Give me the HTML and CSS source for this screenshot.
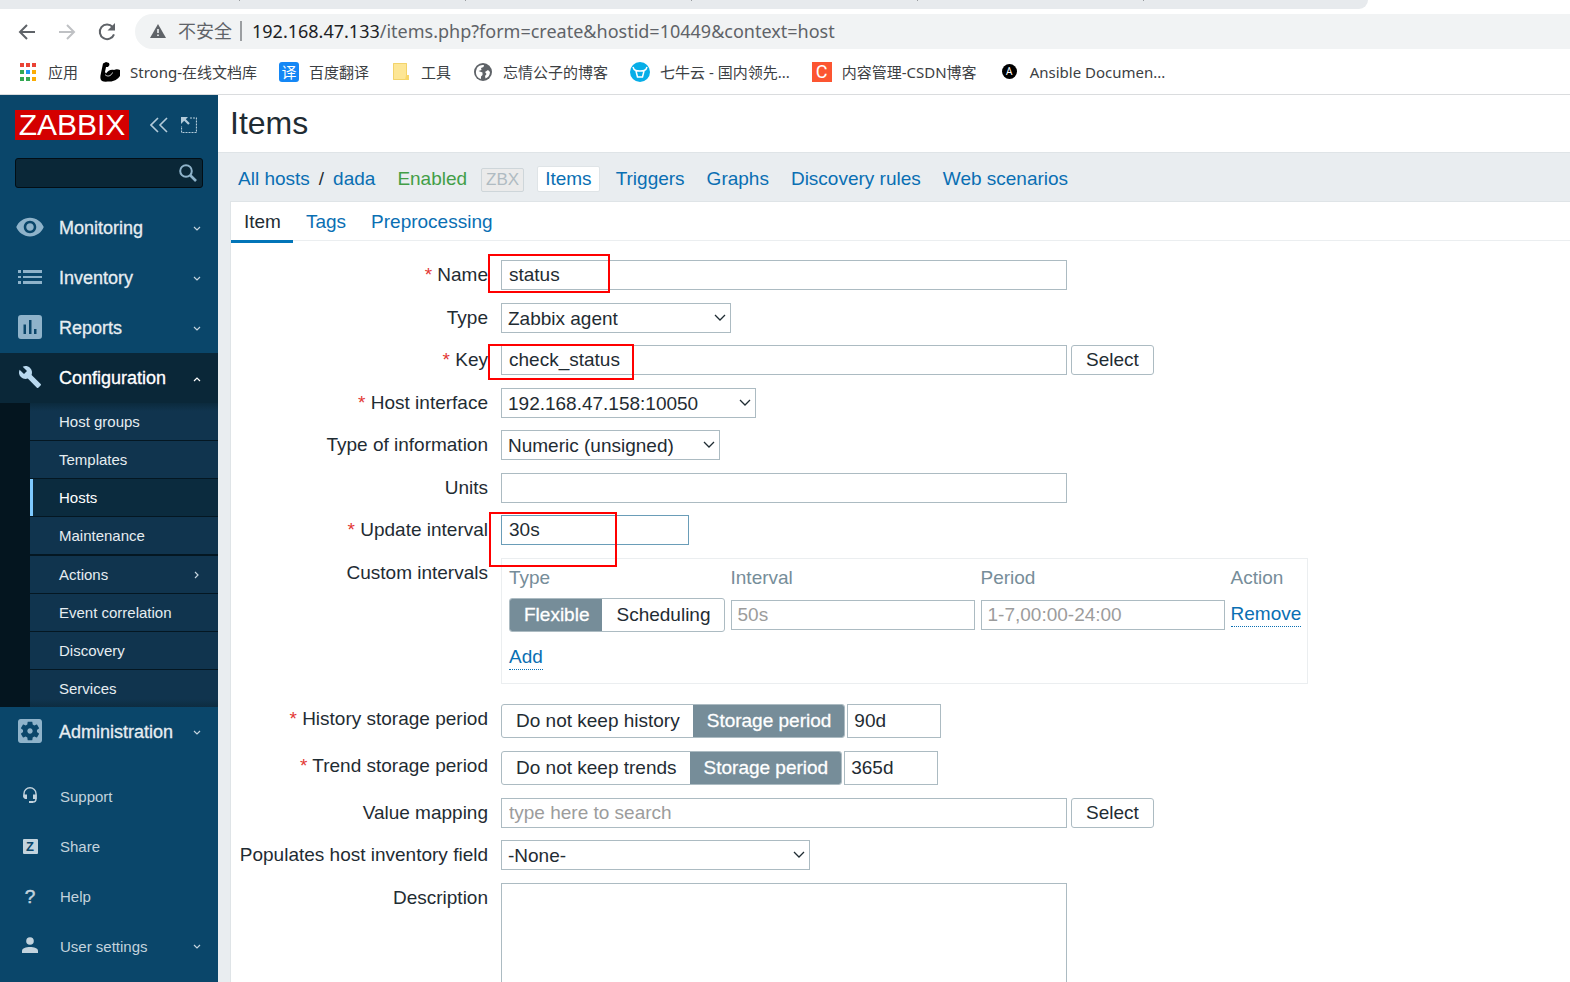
FILE: index.html
```html
<!DOCTYPE html>
<html lang="en">
<head>
<meta charset="utf-8">
<title>Items</title>
<link rel="stylesheet" href="styles.css">
</head>
<body>
<svg class="defs" aria-hidden="true">
  <symbol id="chev-down" viewBox="0 0 8 6"><path d="M1 1l3 3 3-3" fill="none" stroke="currentColor" stroke-width="1.2"/></symbol>
  <symbol id="select-arrow" viewBox="0 0 12 8"><path d="M1 1l5 5 5-5" fill="none" stroke="currentColor" stroke-width="1.3"/></symbol>
</svg>
<div class="window">
  <header class="browser">
    <div class="tabstrip"><i></i><i></i><i></i><i></i><i></i></div>
    <div class="toolbar">
      <button class="tool" aria-label="Back"><svg width="18" height="16" viewBox="0 0 18 16"><path d="M17 8H2M9 1L2 8l7 7" fill="none" stroke="#5f6368" stroke-width="2"/></svg></button>
      <button class="tool" aria-label="Forward"><svg width="18" height="16" viewBox="0 0 18 16"><path d="M1 8h15M9 1l7 7-7 7" fill="none" stroke="#bfc1c4" stroke-width="2"/></svg></button>
      <button class="tool" aria-label="Reload"><svg width="18" height="18" viewBox="0 0 18 18"><path d="M14.600 4A7.300 7.300 0 1 0 16 11.300" fill="none" stroke="#5f6368" stroke-width="2"/><path d="M17 0v7.500H9.500z" fill="#5f6368"/></svg></button>
      <div class="address">
        <svg width="16" height="14" viewBox="0 0 16 14"><path d="M8 0l8 14H0z" fill="#5f6368"/><path d="M7.200 5h1.600v4H7.200zM7.200 10.400h1.600V12H7.200z" fill="#f1f3f4"/></svg>
        <span class="insecure">不安全</span>
        <span class="url"><b>192.168.47.133</b>/items.php?form=create&amp;hostid=10449&amp;context=host</span>
      </div>
    </div>
    <nav class="bookmarks">
      <a href="#"><svg width="20" height="18" viewBox="0 0 20 18"><g fill="#ea4335"><path d="M2 0h4v4H2zM8 0h4v4H8zM14 0h4v4h-4z"/></g><path d="M2 7h4v4H2zM2 14h4v4H2zM8 14h4v4H8z" fill="#34a853"/><path d="M8 7h4v4H8z" fill="#2196f3"/><path d="M14 7h4v4h-4zM14 14h4v4h-4z" fill="#fbac04"/></svg>应用</a>
      <a href="#"><svg width="20" height="20" viewBox="0 0 20 20"><path d="M3 1.500L6 0l3 1 .5 2L8 5H6l-1 5 1 1.500C8 8.500 11 7 14 8c2-1.200 4-1 6 0v6c-2 3-6 5.500-10 5.500-3 0-6 .5-8-.5-2-1.500-2-4-1-8z" fill="#000"/><path d="M5 12.500c2 2.500 6 2 7.500-2" fill="none" stroke="#fff" stroke-width=".8"/></svg>Strong-在线文档库</a>
      <a href="#"><span class="fav fav-yi">译</span>百度翻译</a>
      <a href="#"><svg width="20" height="20" viewBox="0 0 20 20"><path d="M2 1h14v12l2 1v4H2z" fill="#fde48d"/><path d="M2.500 1.500h13v16h-13z" fill="#fde695" stroke="#f2d36b"/><path d="M15 13h3v5h-4z" fill="#f8d76a"/></svg>工具</a>
      <a href="#"><svg width="20" height="20" viewBox="0 0 20 20"><circle cx="10" cy="10" r="9" fill="#5f6368"/><path d="M4 6c1.500-2.500 4.500-3.500 7-3l-.5 2-2.500 1 .5 2-3 1 4 1.500v2.500L8 14.500V17C4.500 16 2.500 13 3 9zM12 10l3-2 2 2c0 3.500-2 5.500-4.500 6.500L12 14l1.500-2z" fill="#fff"/></svg>忘情公子的博客</a>
      <a href="#"><svg width="20" height="20" viewBox="0 0 20 20"><circle cx="10" cy="10" r="10" fill="#07aee8"/><path d="M3 5c1 4 4 4 7 4s6 0 7-4M6 9l1.500 6h5L14 9" fill="none" stroke="#fff" stroke-width="1.500"/></svg>七牛云 - 国内领先...</a>
      <a href="#"><span class="fav fav-c">C</span>内容管理-CSDN博客</a>
      <a href="#"><span class="fav fav-a">A</span>Ansible Documen...</a>
    </nav>
  </header>

  <div class="app">
    <aside class="sidebar">
      <div class="brand">
        <a class="logo" href="#">ZABBIX</a>
        <button class="side-btn" aria-label="Collapse sidebar"><svg width="18" height="16" viewBox="0 0 18 16"><path d="M8 1L1 8l7 7M17 1l-7 7 7 7" fill="none" stroke="currentColor" stroke-width="1.600"/></svg></button>
        <button class="side-btn" aria-label="Hide sidebar"><svg width="16" height="16" viewBox="0 0 16 16"><path d="M0 0h7L4.800 2.200l4 4-1.600 1.600-4-4L0 7z" fill="currentColor"/><path d="M9 1h6.500v14.500H.5V9" fill="none" stroke="currentColor" stroke-width="1.200" stroke-dasharray="2 1"/></svg></button>
      </div>
      <div class="search">
        <input type="search" aria-label="Search">
        <svg width="18" height="18" viewBox="0 0 18 18"><circle cx="7" cy="7" r="5.800" fill="none" stroke="currentColor" stroke-width="2"/><path d="M11 11l6 6" stroke="currentColor" stroke-width="2.600"/></svg>
      </div>
      <nav>
        <a class="menu" href="#"><svg class="ico" width="30" height="30" viewBox="0 0 24 24"><path fill="currentColor" d="M12 4.500C7 4.500 2.730 7.610 1 12c1.730 4.390 6 7.500 11 7.500s9.270-3.110 11-7.500c-1.730-4.390-6-7.500-11-7.500zM12 17c-2.760 0-5-2.240-5-5s2.240-5 5-5 5 2.240 5 5-2.240 5-5 5zm0-8c-1.660 0-3 1.340-3 3s1.340 3 3 3 3-1.340 3-3-1.340-3-3-3z"/></svg><span>Monitoring</span><svg class="chev"><use href="#chev-down"/></svg></a>
        <a class="menu" href="#"><svg class="ico" width="24" height="14" viewBox="0 0 24 14"><path fill="currentColor" d="M0 0h3v3H0zM5 0h19v3H5zM0 6h3v2H0zM5 6h19v2H5zM0 11h3v3H0zM5 11h19v3H5z"/></svg><span>Inventory</span><svg class="chev"><use href="#chev-down"/></svg></a>
        <a class="menu" href="#"><svg class="ico" width="24" height="24" viewBox="0 0 24 24"><path fill="currentColor" fill-rule="evenodd" d="M3 0h18a3 3 0 0 1 3 3v18a3 3 0 0 1-3 3H3a3 3 0 0 1-3-3V3a3 3 0 0 1 3-3zM5.500 9.500V19H8V9.500zM11 5v14h2.500V5zM16 14v5h2.500v-5z"/></svg><span>Reports</span><svg class="chev"><use href="#chev-down"/></svg></a>
        <a class="menu open" href="#"><svg class="ico" width="24" height="24" viewBox="0 0 24 24"><path fill="currentColor" d="M22.700 19l-9.100-9.100c.9-2.300.4-5-1.500-6.900-2-2-5-2.400-7.400-1.300L9 6 6 9 1.600 4.700C.4 7.100.9 10.100 2.900 12.100c1.900 1.900 4.600 2.400 6.900 1.500l9.100 9.100c.4.400 1 .4 1.400 0l2.300-2.300c.5-.4.5-1.100.1-1.400z"/></svg><span>Configuration</span><svg class="chev up"><use href="#chev-down"/></svg></a>
        <div class="submenu">
          <a href="#">Host groups</a>
          <a href="#">Templates</a>
          <a href="#" class="current">Hosts</a>
          <a href="#" class="group-end">Maintenance</a>
          <a href="#">Actions<svg class="chev right"><use href="#chev-down"/></svg></a>
          <a href="#">Event correlation</a>
          <a href="#">Discovery</a>
          <a href="#">Services</a>
        </div>
        <a class="menu" href="#"><svg class="ico" width="24" height="24" viewBox="3 3 18 18"><path fill="currentColor" d="M12 10c-1.100 0-2 .9-2 2s.9 2 2 2 2-.9 2-2-.9-2-2-2zm7-7H5c-1.110 0-2 .9-2 2v14c0 1.100.89 2 2 2h14c1.110 0 2-.9 2-2V5c0-1.100-.89-2-2-2zm-1.750 9c0 .23-.02.46-.05.68l1.480 1.160c.13.11.17.3.08.45l-1.400 2.420c-.09.15-.27.21-.43.15l-1.740-.7c-.36.28-.76.51-1.180.69l-.26 1.850c-.03.17-.18.3-.35.3h-2.800c-.17 0-.32-.13-.35-.29l-.26-1.850c-.43-.18-.82-.41-1.180-.69l-1.740.7c-.16.06-.34 0-.43-.15l-1.400-2.420c-.09-.15-.05-.34.08-.45l1.480-1.160c-.03-.23-.05-.46-.05-.69 0-.23.02-.46.05-.68l-1.480-1.160c-.13-.11-.17-.3-.08-.45l1.400-2.420c.09-.15.27-.21.43-.15l1.740.7c.36-.28.76-.51 1.180-.69l.26-1.850c.03-.17.18-.3.35-.3h2.800c.17 0 .32.13.35.29l.26 1.850c.43.18.82.41 1.180.69l1.740-.7c.16-.06.34 0 .43.15l1.400 2.420c.09.15.05.34-.08.45l-1.480 1.160c.03.23.05.46.05.69z"/></svg><span>Administration</span><svg class="chev"><use href="#chev-down"/></svg></a>
      </nav>
      <nav class="user-nav">
        <a href="#"><svg class="ico" width="16" height="16" viewBox="0 0 16 16"><path d="M2 10V6.500a6 5.700 0 0 1 12 0V12c0 2-1 3-3 3H8" fill="none" stroke="currentColor" stroke-width="1.400"/><path d="M1.300 7.500H5V12H3L1.300 10.500zM14.700 7.500H11V12h3.700zM7 14h4v2H7z" fill="currentColor"/></svg><span>Support</span></a>
        <a href="#"><i class="ico zed">Z</i><span>Share</span></a>
        <a href="#"><i class="ico qm">?</i><span>Help</span></a>
        <a href="#"><svg class="ico" width="16" height="16" viewBox="0 0 16 16"><circle cx="8" cy="4" r="3.800" fill="currentColor"/><path d="M0 16v-2c0-3 4-4 8-4s8 1 8 4v2z" fill="currentColor"/></svg><span>User settings</span><svg class="chev"><use href="#chev-down"/></svg></a>
      </nav>
    </aside>

    <main class="main">
      <header class="page-head"><h1>Items</h1></header>
      <nav class="crumbs">
        <div class="path"><a href="#">All hosts</a><span>/</span><a href="#">dada</a></div>
        <span class="ok">Enabled</span>
        <span class="zbx">ZBX</span>
        <a href="#" class="selected">Items</a>
        <div class="links">
          <a href="#">Triggers</a>
          <a href="#">Graphs</a>
          <a href="#">Discovery rules</a>
          <a href="#">Web scenarios</a>
        </div>
      </nav>
      <section class="panel">
        <nav class="tabs"><a href="#" class="active">Item</a><a href="#">Tags</a><a href="#">Preprocessing</a></nav>
        <form class="form">
          <div class="row tall"><label class="req" for="name">Name</label><div class="field"><input class="wide" id="name" value="status"><span class="mark mark-name"></span></div></div>
          <div class="row"><label for="type">Type</label><div class="field"><span class="select w-type"><select id="type"><option>Zabbix agent</option></select><svg><use href="#select-arrow"/></svg></span></div></div>
          <div class="row tall"><label class="req" for="key">Key</label><div class="field"><input class="wide" id="key" value="check_status"><button type="button" class="btn">Select</button><span class="mark mark-key"></span></div></div>
          <div class="row"><label class="req" for="iface">Host interface</label><div class="field"><span class="select w-iface"><select id="iface"><option>192.168.47.158:10050</option></select><svg><use href="#select-arrow"/></svg></span></div></div>
          <div class="row tall"><label for="info">Type of information</label><div class="field"><span class="select w-info"><select id="info"><option>Numeric (unsigned)</option></select><svg><use href="#select-arrow"/></svg></span></div></div>
          <div class="row"><label for="units">Units</label><div class="field"><input class="wide" id="units"></div></div>
          <div class="row tall"><label class="req" for="delay">Update interval</label><div class="field"><input class="short focus" id="delay" value="30s"><span class="mark mark-delay"></span></div></div>
          <div class="row intervals-row"><span class="label">Custom intervals</span>
            <div class="field">
              <div class="intervals">
                <table>
                  <thead><tr><th>Type</th><th>Interval</th><th>Period</th><th>Action</th></tr></thead>
                  <tbody>
                    <tr>
                      <td><div class="seg"><label><input type="radio" name="itype" checked><span>Flexible</span></label><label><input type="radio" name="itype"><span>Scheduling</span></label></div></td>
                      <td><input class="cell" aria-label="Interval" placeholder="50s"></td>
                      <td><input class="cell" aria-label="Period" placeholder="1-7,00:00-24:00"></td>
                      <td><button type="button" class="link">Remove</button></td>
                    </tr>
                  </tbody>
                </table>
                <button type="button" class="link">Add</button>
              </div>
            </div>
          </div>
          <div class="row storage"><label class="req" for="history">History storage period</label><div class="field tight"><div class="seg"><label><input type="radio" name="hist"><span>Do not keep history</span></label><label><input type="radio" name="hist" checked><span>Storage period</span></label></div><input class="mini" id="history" value="90d"></div></div>
          <div class="row storage"><label class="req" for="trends">Trend storage period</label><div class="field tight"><div class="seg"><label><input type="radio" name="trend"><span>Do not keep trends</span></label><label><input type="radio" name="trend" checked><span>Storage period</span></label></div><input class="mini" id="trends" value="365d"></div></div>
          <div class="row"><label for="vm">Value mapping</label><div class="field"><input class="wide" id="vm" placeholder="type here to search"><button type="button" class="btn">Select</button></div></div>
          <div class="row tall"><label for="inv">Populates host inventory field</label><div class="field"><span class="select w-inv"><select id="inv"><option>-None-</option></select><svg><use href="#select-arrow"/></svg></span></div></div>
          <div class="row"><label for="desc">Description</label><div class="field"><textarea class="wide" id="desc" rows="7"></textarea></div></div>
        </form>
      </section>
    </main>
  </div>
</div>
</body>
</html>
```

FILE: styles.css
```css
* { box-sizing: border-box; }
body { margin: 0; font-family: "Liberation Sans", "Noto Sans CJK SC", Arial, sans-serif; font-size: 19px; color: #1f2c33; background: #fff; }
a { color: #0a6fb3; text-decoration: none; }
button, input, select, textarea { font: inherit; color: inherit; margin: 0; }
button { background: none; border: 0; padding: 0; cursor: pointer; }
svg { display: block; flex: none; }
.defs { display: none; }
.window { display: flex; flex-direction: column; height: 100vh; overflow: hidden; }

/* Browser chrome */
.browser { flex: none; background: #fff; border-bottom: 1px solid #dadcde; font-family: "Noto Sans", "Noto Sans CJK SC", sans-serif; }
.tabstrip { display: flex; gap: 225px; margin-right: 202px; height: 9px; padding-left: 239px; background: #e7eaed; border-bottom-right-radius: 9px; overflow: hidden; }
.tabstrip i { flex: none; width: 1px; height: 1px; background: #9a9da0; }
.toolbar { display: flex; align-items: center; padding: 5px 0 0 7px; }
.tool { display: grid; place-items: center; width: 40px; height: 35px; }
.address { flex: 1; display: flex; align-items: center; height: 35px; margin-left: 8px; padding: 0 0 2px 15px; background: #f1f3f4; border-radius: 18px 0 0 18px; font-size: 18px; line-height: 20px; color: #5f6368; }
.insecure { margin-left: 12px; padding-right: 8px; border-right: 2px solid #9b9ea1; }
.url { margin-left: 10px; white-space: nowrap; }
.url b { font-weight: 400; color: #202124; }
.bookmarks { display: flex; align-items: center; gap: 22px; height: 45px; padding: 0 18px; font-size: 15px; }
.bookmarks a { display: flex; align-items: center; gap: 10px; color: #3c4043; white-space: nowrap; }
.fav { display: grid; place-items: center; width: 20px; height: 20px; color: #fff; line-height: 20px; }
.fav-yi { background: #1487f5; border-radius: 3px; font-size: 15px; }
.fav-c { background: #fc5531; font-family: Roboto, sans-serif; font-size: 18px; }
.fav-a { width: 15px; height: 15px; margin: 0 3px; background: #000; border-radius: 50%; font-size: 10px; line-height: 15px; }

/* Sidebar */
.app { flex: 1; display: flex; min-height: 0; }
.sidebar { flex: none; width: 218px; background: #0a466a; color: #8fb3ca; }
.brand { display: flex; align-items: center; padding: 15px 15px 0; }
.logo { width: 114px; height: 30px; margin-right: 21px; background: #d40000; color: #fff; font-size: 30px; line-height: 30px; text-align: center; }
.side-btn { color: #b3cbda; margin-right: 13px; }
.side-btn:last-child { margin-right: 0; }
.search { display: grid; align-items: center; margin: 18px 15px 15px; color: #8fb3ca; }
.search input, .search svg { grid-area: 1 / 1; }
.search input { width: 100%; height: 30px; padding: 0 30px 0 8px; background: #0a2737; border: 1px solid #020e15; border-radius: 3px; outline: 0; appearance: none; }
.search svg { justify-self: end; margin-right: 6px; }
.menu, .user-nav a { display: grid; grid-template-columns: 59px 1fr 8px; align-items: center; height: 50px; padding-right: 17px; color: #8fb3ca; }
.menu span { color: #e6edf1; font-size: 18px; -webkit-text-stroke: 0.3px; }
.ico { justify-self: center; margin-bottom: 2px; }
.chev { width: 8px; height: 6px; color: #c4d4de; }
.menu .chev, .user-nav .chev { margin-top: 2px; }
.chev.up { transform: rotate(180deg); }
.chev.right { transform: rotate(-90deg); }
.menu.open { background: #0a2738; color: #b9d9ef; }
.menu.open span, .menu.open .chev { color: #fff; }
.submenu { padding-left: 30px; background: #04151f; }
.submenu a { display: flex; align-items: center; justify-content: space-between; height: 38px; padding: 0 17px 0 29px; border-bottom: 1px solid #041722; background: #10344e; color: #e6edf1; font-size: 15px; }
.submenu a:first-child { background: linear-gradient(#0b2a3d, #10344e 8px); }
.submenu a:last-child { height: 37px; border-bottom: 0; background: linear-gradient(#10344e 29px, #0d2c40); }
.submenu .group-end { height: 39px; border-bottom-width: 2px; }
.submenu .current { padding-left: 29px; background: linear-gradient(90deg, #7ecaff 3px, #0b2b3e 3px); color: #fff; }
.user-nav { padding-top: 14px; }
.user-nav a { grid-template-columns: 60px 1fr 8px; color: #c3d3dd; font-size: 15px; }
.zed, .qm { font-style: normal; font-weight: 700; text-align: center; width: 15px; height: 15px; line-height: 15px; margin-bottom: 0; }
.zed { background: #c3d3dd; color: #0a466a; font-size: 13px; border-radius: 1px; }
.qm { font-size: 19px; font-weight: 400; -webkit-text-stroke: 0.5px; }

/* Page */
.main { flex: 1; min-width: 0; display: flex; flex-direction: column; background: #e9edf0; }
.page-head { flex: none; height: 58px; padding-left: 12px; background: #fff; border-bottom: 1px solid #dfe4e7; }
h1 { margin: 0; font-size: 32px; font-weight: 400; line-height: 56px; }
.crumbs { flex: none; display: flex; align-items: center; height: 48px; padding: 4px 20px 0 20px; line-height: 24px; white-space: nowrap; }
.path { display: flex; gap: 9px; }
.ok { margin-left: 22px; color: #429e47; }
.zbx { margin: 2px 13px 0 14px; padding: 0 4px; border: 1px solid #ced6da; border-radius: 2px; background: #ebebeb; color: #b0bbc2; font-size: 17px; line-height: 22px; }
.crumbs .selected { padding: 0 7px; border: 1px solid #dfe4e7; border-radius: 2px; background: #fff; }
.links { display: flex; gap: 22px; margin-left: 16px; }
.panel { flex: 1; min-height: 0; margin-left: 12px; background: #fff; border: solid #dfe4e7; border-width: 1px 0 0 1px; }
.tabs { display: flex; height: 39px; border-bottom: 1px solid #ebeef0; }
.tabs a { height: 41px; padding: 0 12px 0 13px; line-height: 40px; }
.tabs .active { color: #1f2c33; border-bottom: 3px solid #0275b8; }

/* Form */
.form { display: flex; flex-direction: column; gap: 12px; padding-top: 19px; }
.row { display: grid; grid-template-columns: 257px minmax(0, 1fr); column-gap: 13px; min-height: 30px; }
.row.tall { min-height: 31px; }
.row.storage { min-height: 35px; }
.row.intervals-row { min-height: 134px; }
.row > label, .label { justify-self: end; line-height: 29px; white-space: nowrap; }
.req::before { content: "* "; color: #e33734; }
.field { position: relative; display: flex; align-items: flex-start; gap: 4px; }
.field.tight { gap: 2px; }
.field > input, .cell, select, textarea { height: 30px; padding: 0 7px; border: 1px solid #acbbc2; border-radius: 0; background: #fff; outline: 0; }
::placeholder { color: #9c9c9c; opacity: 1; }
.field > .wide { width: 566px; }
.field > .short { width: 188px; }
.field > .mini { width: 94px; height: 34px; padding: 0 6px; }
.field > .focus { border-color: #6a9db8; }
textarea.wide { height: auto; resize: none; }
.btn { height: 30px; padding: 0 14px; border: 1px solid #acbbc2; border-radius: 3px; }
.select { display: grid; align-items: center; }
.select select, .select svg { grid-area: 1 / 1; }
.select select { width: 100%; padding: 1px 6px 0; appearance: none; }
.select svg { justify-self: end; width: 12px; height: 8px; margin-right: 5px; pointer-events: none; }
.w-type { width: 230px; }
.w-iface { width: 255px; }
.w-info { width: 219px; }
.w-inv { width: 309px; }
.intervals { padding: 0 7px; width: 807px; height: 126px; border: 1px solid #ebeef0; }
table { border-collapse: collapse; }
th, td { padding: 0 6px 0 0; text-align: left; font-weight: 400; }
th { height: 38px; color: #768d99; }
td { height: 35px; }
td:last-child { padding: 0; }
.cell { display: block; width: 244px; padding: 0 6px; }
.link { color: #0a6fb3; border-bottom: 1px dotted #0a6fb3; line-height: 24px; }
.intervals > .link { margin-top: 13px; }
.seg { display: flex; width: max-content; height: 34px; border: 1px solid #acbbc2; border-radius: 3px; overflow: hidden; }
.seg label { position: relative; display: flex; }
.seg input { position: absolute; opacity: 0; }
.seg span { padding: 0 13px 0 14px; line-height: 32px; white-space: nowrap; }
.seg input:checked + span { background: #768d99; color: #fff; -webkit-text-stroke: 0.3px; }

/* Highlight boxes laid over the fields */
.mark { position: absolute; z-index: 1; border: 2px solid #f00; pointer-events: none; left: -13px; }
.mark-name { top: -6px; width: 122px; height: 39px; }
.mark-key { top: -1px; width: 146px; height: 36px; }
.mark-delay { left: -12px; top: -3px; width: 128px; height: 55px; }
```
